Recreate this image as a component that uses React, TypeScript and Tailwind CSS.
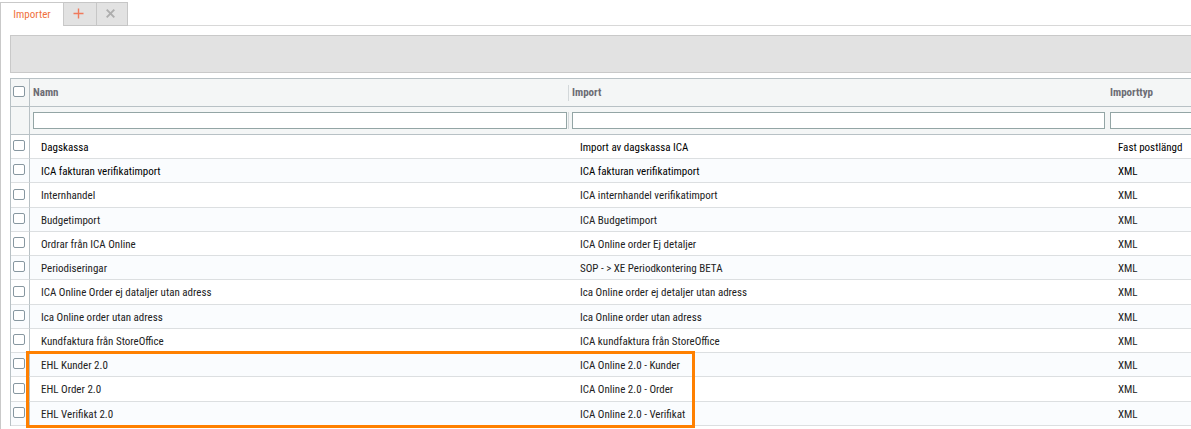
import { useState } from "react";

type ImportRow = {
  name: string;
  source: string;
  type: string;
};

const rows: ImportRow[] = [
  { name: "Dagskassa", source: "Import av dagskassa ICA", type: "Fast postlängd" },
  { name: "ICA fakturan verifikatimport", source: "ICA fakturan verifikatimport", type: "XML" },
  { name: "Internhandel", source: "ICA internhandel verifikatimport", type: "XML" },
  { name: "Budgetimport", source: "ICA Budgetimport", type: "XML" },
  { name: "Ordrar från ICA Online", source: "ICA Online order Ej detaljer", type: "XML" },
  { name: "Periodiseringar", source: "SOP - > XE Periodkontering BETA", type: "XML" },
  { name: "ICA Online Order ej dataljer utan adress", source: "Ica Online order ej detaljer utan adress", type: "XML" },
  { name: "Ica Online order utan adress", source: "Ica Online order utan adress", type: "XML" },
  { name: "Kundfaktura från StoreOffice", source: "ICA kundfaktura från StoreOffice", type: "XML" },
  { name: "EHL Kunder 2.0", source: "ICA Online 2.0 - Kunder", type: "XML" },
  { name: "EHL Order 2.0", source: "ICA Online 2.0 - Order", type: "XML" },
  { name: "EHL Verifikat 2.0", source: "ICA Online 2.0 - Verifikat", type: "XML" },
];

const checkboxClass =
  "block h-[11px] w-3 appearance-none rounded-[2px] border border-[#8797a0] bg-white checked:bg-[#f26a4b]";
const filterClass = "block h-[17px] w-full border border-[#93a5a5] bg-white px-1 outline-none";

export default function App() {
  const [selected, setSelected] = useState<string[]>([]);

  const toggle = (name: string) => {
    setSelected((prev) => (prev.includes(name) ? prev.filter((n) => n !== name) : [...prev, name]));
  };

  const allSelected = selected.length === rows.length;

  return (
    <main className="flex min-h-screen flex-col overflow-hidden bg-white pt-0.5 font-['Roboto_Condensed','Roboto','Liberation_Sans',sans-serif] text-[11px] leading-4 text-[#222]">
      {/* Tabs */}
      <div className="flex h-6 shrink-0 border-b border-[#d8d8d8]">
        <button className="-mb-px h-6 w-16 border border-b-0 border-[#c9c9c9] bg-white text-[#f0703c]">
          Importer
        </button>
        <button
          aria-label="Ny flik"
          className="-mb-px flex h-6 w-8 items-center justify-center border-y border-[#c6c6c6] bg-[#e2e2e2] pr-1 pb-0.5"
        >
          <svg className="h-[11px] w-[11px]" viewBox="0 0 11 11" stroke="#f07a5c" strokeWidth="1.4">
            <path d="M5.5 0.5V10.5M0.5 5.5H10.5" />
          </svg>
        </button>
        <button
          aria-label="Stäng flik"
          className="-mb-px flex h-6 w-8 items-center justify-center border border-[#c6c6c6] bg-[#e2e2e2] pr-1 pb-0.5"
        >
          <svg className="h-[9px] w-[9px]" viewBox="0 0 9 9" stroke="#adadad" strokeWidth="1.9">
            <path d="M0.7 0.7L8.3 8.3M8.3 0.7L0.7 8.3" />
          </svg>
        </button>
      </div>

      <div className="flex-1 border-l border-[#c9c9c9] pt-[9px] pl-[9px]">
        {/* Toolbar */}
        <div className="mb-[5px] h-[38px] border border-r-0 border-[#c9c9c9] bg-[#e2e2e2]" />

        <div className="relative">
          <table className="w-full table-fixed border-separate border-spacing-0 border-t border-l border-[#b8c1c5] text-left">
            <colgroup>
              <col className="w-[19px]" />
              <col className="w-[539px]" />
              <col className="w-[538px]" />
              <col />
            </colgroup>
            <thead className="bg-[#f4f6f6] text-[#6c6c74]">
              <tr className="h-7 [&>th]:border-b [&>th]:border-[#b8c1c5]">
                <th className="border-r pb-0.5 pl-0.5">
                  <input
                    type="checkbox"
                    aria-label="Markera alla"
                    className={checkboxClass}
                    checked={allSelected}
                    onChange={() => setSelected(allSelected ? [] : rows.map((r) => r.name))}
                  />
                </th>
                <th className="p-0">
                  <div className="border-r border-[#d3d8da] pl-[3px]">Namn</div>
                </th>
                <th className="pl-[3px]">Import</th>
                <th className="pl-[3px]">Importtyp</th>
              </tr>
              <tr className="h-7 [&>td]:border-b [&>td]:border-[#b8c1c5]">
                <td className="border-r" />
                <td className="p-0">
                  <div className="border-r border-[#d3d8da] pr-px pl-[3px]">
                    <input aria-label="Filtrera namn" className={filterClass} />
                  </div>
                </td>
                <td className="pr-0.5 pl-[3px]">
                  <input aria-label="Filtrera import" className={filterClass} />
                </td>
                <td className="pl-[3px]">
                  <input aria-label="Filtrera importtyp" className={`${filterClass} border-r-0`} />
                </td>
              </tr>
            </thead>
            <tbody>
              {rows.map((row) => (
                <tr
                  key={row.name}
                  className="h-6 even:bg-[#fafcfe] [&:nth-child(4n+3)]:h-[25px] [&>td]:border-b [&>td]:border-[#dcdfe1] [&:nth-child(-n+2)]:text-black"
                >
                  <td className="border-r border-r-[#b8c1c5]! pb-0.5 pl-0.5">
                    <input
                      type="checkbox"
                      aria-label={`Markera ${row.name}`}
                      className={checkboxClass}
                      checked={selected.includes(row.name)}
                      onChange={() => toggle(row.name)}
                    />
                  </td>
                  <td className="truncate pt-0.5 pl-[11px]">{row.name}</td>
                  <td className="truncate pt-0.5 pl-[11px]">{row.source}</td>
                  <td className="truncate pt-0.5 pl-[11px]">{row.type}</td>
                </tr>
              ))}
            </tbody>
          </table>

          {/* Highlight around the EHL imports */}
          <div className="pointer-events-none absolute -bottom-0.5 left-4 h-[77px] w-[669px] border-3 border-[#ff8000]" />
        </div>
      </div>
    </main>
  );
}
